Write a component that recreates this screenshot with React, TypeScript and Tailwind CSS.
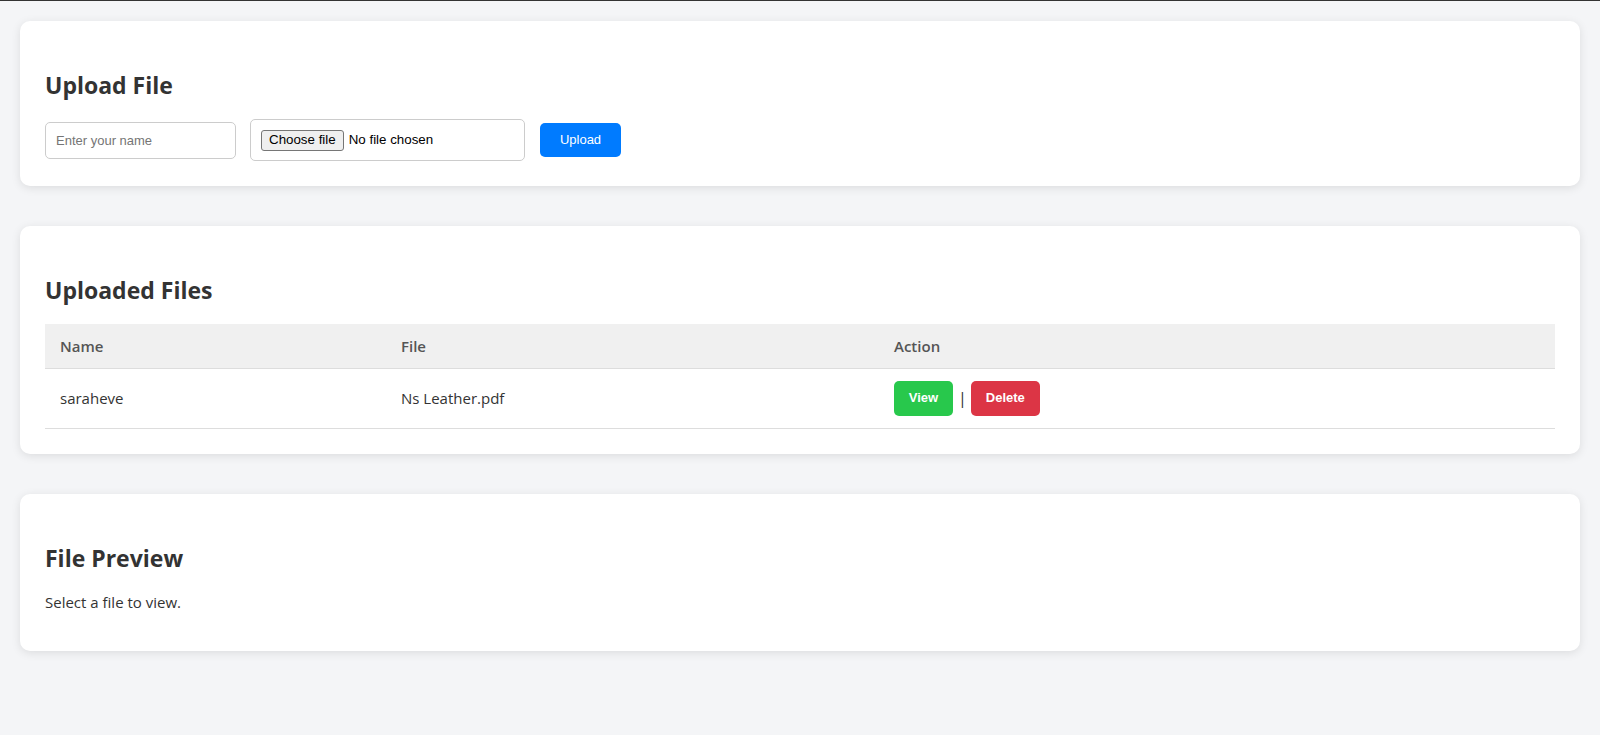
import React, { useState } from "react";

type Row = { name: string; file: string };

function Card({ title, children }: { title: string; children: React.ReactNode }) {
  return (
    <section className="bg-white rounded-[10px] px-[25px] py-[25px] shadow-[0_2px_10px_rgba(0,0,0,0.1)]">
      <h2 className="mt-[23px] mb-[18px] text-[23px] leading-[32px] font-bold text-[#333]">{title}</h2>
      {children}
    </section>
  );
}

export default function App() {
  const [name, setName] = useState("");
  const [fileName, setFileName] = useState<string | null>(null);
  const [rows] = useState<Row[]>([{ name: "saraheve", file: "Ns Leather.pdf" }]);

  return (
    <div
      className="min-h-[735px] bg-[#f4f5f7] border-t border-[#333] px-[20px] pt-[20px] pb-[20px] text-[#333]"
      style={{ fontFamily: '"Open Sans", "Noto Sans", sans-serif' }}
    >
      <div className="flex flex-col gap-[40px]">
        <Card title="Upload File">
          <div className="flex items-center">
            <input
              value={name}
              onChange={(e) => setName(e.target.value)}
              placeholder="Enter your name"
              className="w-[191px] h-[37px] px-[10px] border border-[#ccc] rounded-[5px] text-[13px] placeholder:text-[#757575] outline-none"
              style={{ fontFamily: '"Liberation Sans", Arial, sans-serif' }}
            />
            {/* native file input text differs per browser, so fake the look */}
            <label
              className="ml-[14px] w-[275px] h-[42px] px-[10px] flex items-center border border-[#ccc] rounded-[5px] text-[13.33px] text-black cursor-pointer"
              style={{ fontFamily: '"Liberation Sans", Arial, sans-serif' }}
            >
              <input
                type="file"
                className="hidden"
                onChange={(e) => setFileName(e.target.files?.[0]?.name ?? null)}
              />
              <span className="h-[21px] px-[7px] flex items-center bg-[#efefef] border border-[#767676] rounded-[3px]">
                Choose file
              </span>
              <span className="ml-[5px]">{fileName ?? "No file chosen"}</span>
            </label>
            <button
              type="button"
              className="ml-[15px] w-[81px] h-[34px] rounded-[5px] bg-[#007bff] text-white text-[13px]"
              style={{ fontFamily: '"Liberation Sans", Arial, sans-serif' }}
            >
              Upload
            </button>
          </div>
        </Card>

        <Card title="Uploaded Files">
          <table className="w-full border-collapse text-[15px]">
            <thead>
              <tr className="bg-[#f0f0f0]">
                <th className="w-[341px] h-[44px] px-[15px] text-left font-semibold text-[#555] border-b border-[#ddd]">Name</th>
                <th className="w-[493px] h-[44px] px-[15px] text-left font-semibold text-[#555] border-b border-[#ddd]">File</th>
                <th className="h-[44px] px-[15px] text-left font-semibold text-[#555] border-b border-[#ddd]">Action</th>
              </tr>
            </thead>
            <tbody>
              {rows.map((r) => (
                <tr key={r.file}>
                  <td className="h-[60px] px-[15px] border-b border-[#ddd]">{r.name}</td>
                  <td className="h-[60px] px-[15px] border-b border-[#ddd]">{r.file}</td>
                  <td className="h-[60px] px-[15px] border-b border-[#ddd]">
                    <div className="flex items-center">
                      <button
                        type="button"
                        className="w-[59px] h-[35px] rounded-[5px] bg-[#28c84c] text-white text-[13px] font-bold"
                        style={{ fontFamily: '"Liberation Sans", Arial, sans-serif' }}
                      >
                        View
                      </button>
                      <span className="ml-[5px] mr-[4px] text-[16px] leading-none">|</span>
                      <button
                        type="button"
                        className="w-[69px] h-[35px] rounded-[5px] bg-[#dc3545] text-white text-[13px] font-bold"
                        style={{ fontFamily: '"Liberation Sans", Arial, sans-serif' }}
                      >
                        Delete
                      </button>
                    </div>
                  </td>
                </tr>
              ))}
            </tbody>
          </table>
        </Card>

        <Card title="File Preview">
          <p className="text-[15px] leading-[20px] mb-[14px]">Select a file to view.</p>
        </Card>
      </div>
    </div>
  );
}
